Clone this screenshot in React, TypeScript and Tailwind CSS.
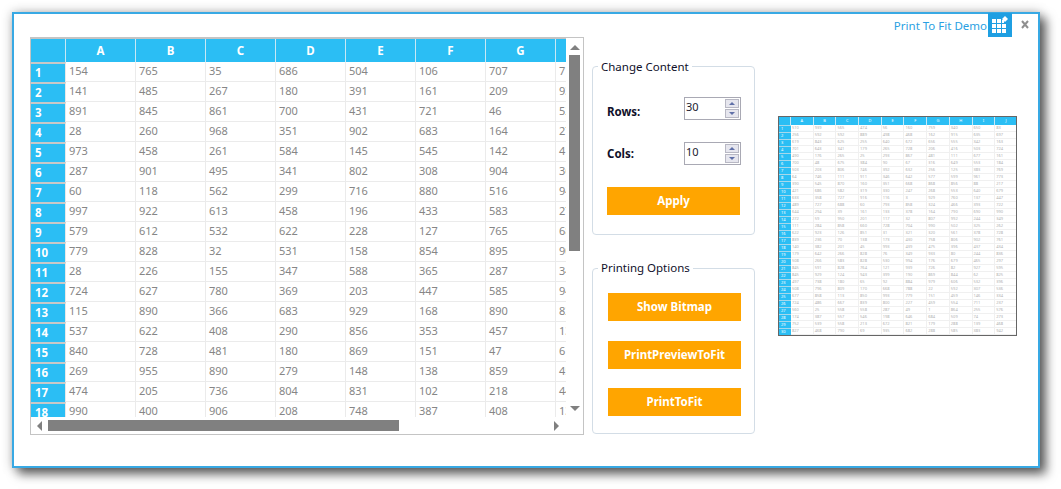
const uiFont = "font-['Noto_Sans','Open_Sans',sans-serif]";

const columns = ["A", "B", "C", "D", "E", "F", "G", "H"];

const rows = [
  [154, 765, 35, 686, 504, 106, 707, 712],
  [141, 485, 267, 180, 391, 161, 209, 934],
  [891, 845, 861, 700, 431, 721, 46, 528],
  [28, 260, 968, 351, 902, 683, 164, 276],
  [973, 458, 261, 584, 145, 545, 142, 413],
  [287, 901, 495, 341, 802, 308, 904, 365],
  [60, 118, 562, 299, 716, 880, 516, 947],
  [997, 922, 613, 458, 196, 433, 583, 271],
  [579, 612, 532, 622, 228, 127, 765, 683],
  [779, 828, 32, 531, 158, 854, 895, 902],
  [28, 226, 155, 347, 588, 365, 287, 349],
  [724, 627, 780, 369, 203, 447, 585, 946],
  [115, 890, 366, 683, 929, 168, 890, 827],
  [537, 622, 408, 290, 856, 353, 457, 135],
  [840, 728, 481, 180, 869, 151, 47, 618],
  [269, 955, 890, 279, 148, 138, 859, 452],
  [474, 205, 736, 804, 831, 102, 218, 447],
  [990, 400, 906, 208, 748, 387, 408, 136],
];

const thumbHeaders = ["A", "B", "C", "D", "E", "F", "G", "H", "I", "J"];

// the preview is stored by column, top to bottom
const thumbColumns = [
  [510, 256, 619, 701, 490, 700, 503, 64, 390, 421, 633, 489, 644, 272, 111, 622, 839, 140, 179, 508, 845, 845, 497, 508, 677, 724, 560, 174, 752, 827],
  [939, 592, 843, 643, 176, 48, 203, 746, 545, 686, 358, 727, 294, 59, 284, 923, 236, 382, 642, 266, 591, 929, 738, 796, 858, 486, 25, 387, 539, 468],
  [565, 592, 625, 341, 265, 675, 806, 111, 870, 582, 727, 688, 39, 950, 858, 126, 70, 201, 266, 583, 828, 124, 180, 809, 113, 667, 558, 557, 558, 790],
  [474, 889, 255, 179, 25, 384, 746, 911, 160, 319, 916, 60, 161, 201, 660, 851, 138, 45, 828, 828, 764, 943, 65, 170, 850, 839, 558, 546, 213, 69],
  [56, 498, 640, 265, 293, 90, 392, 346, 351, 330, 116, 793, 133, 117, 728, 31, 173, 993, 76, 530, 121, 399, 92, 668, 993, 800, 287, 198, 672, 935],
  [160, 468, 672, 728, 867, 67, 632, 642, 668, 247, 3, 858, 378, 32, 704, 321, 430, 439, 349, 994, 939, 190, 884, 788, 779, 227, 49, 646, 821, 682],
  [759, 162, 656, 206, 481, 316, 256, 577, 868, 268, 929, 324, 164, 807, 990, 320, 758, 475, 933, 176, 726, 869, 979, 22, 151, 459, 1, 684, 179, 288],
  [340, 915, 555, 416, 111, 649, 125, 599, 856, 553, 760, 466, 790, 992, 502, 561, 806, 396, 80, 679, 82, 844, 606, 592, 459, 554, 864, 509, 288, 585],
  [650, 635, 342, 503, 677, 553, 383, 961, 88, 640, 137, 393, 690, 244, 325, 378, 902, 437, 244, 465, 927, 62, 532, 307, 146, 711, 255, 74, 139, 383],
  [83, 697, 163, 724, 161, 184, 769, 773, 217, 679, 447, 722, 990, 349, 262, 728, 761, 434, 836, 297, 595, 825, 396, 536, 334, 237, 576, 273, 468, 942],
];

function Grid() {
  return (
    <div className="relative flex h-[398px] w-[554px] shrink-0 flex-col border border-[#c4c4c4] bg-white">
      <div className="h-[379px] w-[536px] overflow-hidden">
        <div className="flex h-[24px] border-t border-[#c4c4c4] bg-[#2bbef4]">
          <div className="w-[35px] shrink-0 border-r border-[#c8e8f5]" />
          {columns.map((col) => (
            <div
              key={col}
              className="flex w-[70px] shrink-0 items-center justify-center border-r border-[#c8e8f5] text-[11.5px] font-bold text-white"
            >
              {col}
            </div>
          ))}
        </div>
        {rows.map((row, i) => (
          <div key={i} className="flex h-[20px]">
            <div className="flex w-[35px] shrink-0 items-center border-t-2 border-r border-t-[#c8c8c8] border-r-[#e8e8e8] bg-[#2bbef4] pl-[4px] text-[11.5px] font-bold text-white">
              {i + 1}
            </div>
            {row.map((v, c) => (
              <div
                key={c}
                className="flex w-[70px] shrink-0 items-center border-r border-b border-[#ebebeb] pl-[3px] text-[11px] text-[#868686]"
              >
                {v}
              </div>
            ))}
          </div>
        ))}
      </div>

      <div className="absolute top-0 right-0 flex h-[379px] w-[17px] flex-col items-center bg-white">
        <div className="mt-[7px] h-0 w-0 border-x-[5px] border-b-[5px] border-x-transparent border-b-[#808080]" />
        <div className="mt-[5px] h-[196px] w-[11px] bg-[#808080]" />
        <div className="mt-[155px] h-0 w-0 border-x-[5px] border-t-[5px] border-x-transparent border-t-[#808080]" />
      </div>

      <div className="flex h-[17px] items-center pl-[6px]">
        <div className="h-0 w-0 border-y-[5px] border-r-[5px] border-y-transparent border-r-[#808080]" />
        <div className="ml-[6px] h-[11px] w-[351px] bg-[#808080]" />
        <div className="ml-[155px] h-0 w-0 border-y-[5px] border-l-[5px] border-y-transparent border-l-[#808080]" />
      </div>
    </div>
  );
}

function Spinner({ value }: { value: number }) {
  return (
    <div className="-mr-[1px] flex h-[23px] w-[57px] border border-[#a9a9b4] bg-white pl-[1px]">
      <span className="flex-1 pt-[1px] text-[11px] leading-[16px] text-[#1a1a2e]">{value}</span>
      <div className="mt-[1px] mr-[1px] flex flex-col gap-[1px]">
        <div className="flex h-[9px] w-[14px] items-center justify-center border border-[#b8b8c4] bg-[#e6e6ee]">
          <div className="h-0 w-0 border-x-[3px] border-b-[3px] border-x-transparent border-b-[#6070a8]" />
        </div>
        <div className="flex h-[9px] w-[14px] items-center justify-center border border-[#b8b8c4] bg-[#e6e6ee]">
          <div className="h-0 w-0 border-x-[3px] border-t-[3px] border-x-transparent border-t-[#6070a8]" />
        </div>
      </div>
    </div>
  );
}

function OrangeButton({ label, className }: { label: string; className: string }) {
  return (
    <div
      className={`flex h-[28px] w-[133px] items-center justify-center bg-[#ffa500] text-[11.5px] font-bold text-white ${className}`}
    >
      {label}
    </div>
  );
}

function Thumbnail() {
  return (
    <div className="h-[220px] w-[239px] overflow-hidden border border-[#666666] bg-white">
      <div className="flex h-[8px] bg-[#2bbef4]">
        <div className="w-[12px] shrink-0 border-r border-[#c8e8f5]" />
        {thumbHeaders.map((c) => (
          <div
            key={c}
            className="flex w-[22.7px] shrink-0 items-center justify-center border-r border-[#c8e8f5] text-[4px] leading-none text-white"
          >
            {c}
          </div>
        ))}
      </div>
      {thumbColumns[0].map((_, i) => (
        <div key={i} className="flex h-[7px]">
          <div className="flex w-[12px] shrink-0 items-center border-t border-[#a8d8ea] bg-[#2bbef4] pl-[2px] text-[4px] leading-none text-white">
            {i + 1}
          </div>
          {thumbColumns.map((col, c) => (
            <div
              key={c}
              className="flex w-[22.7px] shrink-0 items-center border-r border-b border-[#f0f0f0] pl-[1px] text-[4px] leading-none text-[#b0b0b0]"
            >
              {col[i]}
            </div>
          ))}
        </div>
      ))}
    </div>
  );
}

export default function App() {
  return (
    <div className={`h-[489px] w-[1061px] overflow-hidden bg-white pt-[12px] pl-[12px] ${uiFont}`}>
      <div className="flex h-[456px] w-[1028px] flex-col border-2 border-[#38a9e4] bg-white shadow-[6px_6px_10px_rgba(0,0,0,0.6),0_0_10px_rgba(0,0,0,0.25)]">
        <div className="flex h-[23px] shrink-0 items-start justify-end">
          <span className="mt-[4px] text-[11.5px] leading-[16px] text-[#2a9fe2]">Print To Fit Demo</span>
          <div className="-mt-[1px] ml-[1px] h-[24px] w-[24px] bg-[#1f9fe2]">
            <svg width="24" height="24" viewBox="0 0 24 24">
              <path
                d="M4 6h4v4H4zM9 6h4v4H9zM14 7h2v3h-2zM4 11h4v4H4zM9 11h4v4H9zM14 11h4v4h-4zM4 16h4v4H4zM9 16h4v4H9zM14 16h4v4h-4z"
                fill="#fff"
              />
              <path d="M17 3l3 3-3 3-3-3z" fill="#fff" />
            </svg>
          </div>
          <svg className="mt-[6px] mr-[9px] ml-[9px]" width="8" height="9" viewBox="0 0 8 9">
            <path d="M1 1l6 7M7 1L1 8" stroke="#8f8f8f" strokeWidth="2" />
          </svg>
        </div>

        <div className="flex items-start pl-[16px]">
          <Grid />

          <div className="ml-[8px] flex w-[163px] shrink-0 flex-col">
            <fieldset className="mt-[20px] h-[178px] rounded-[4px] border border-[#d3dde6] px-[14px]">
              <legend className="-ml-[9px] px-[3px] pt-[2px] text-[11.5px] leading-[16px] text-[#10102a]">
                Change Content
              </legend>
              <div className="mt-[22px] flex h-[23px] items-center justify-between">
                <span className="pt-[6px] text-[11.5px] font-bold text-[#10102a]">Rows:</span>
                <Spinner value={30} />
              </div>
              <div className="mt-[22px] flex h-[23px] items-center justify-between">
                <span className="text-[11.5px] font-bold text-[#10102a]">Cols:</span>
                <Spinner value={10} />
              </div>
              <OrangeButton label="Apply" className="mt-[22px]" />
            </fieldset>

            <fieldset className="mt-[25px] h-[174px] rounded-[4px] border border-[#d3dde6] pr-[13px] pl-[15px]">
              <legend className="-ml-[10px] px-[3px] text-[11.5px] leading-[16px] text-[#10102a]">
                Printing Options
              </legend>
              <OrangeButton label="Show Bitmap" className="mt-[17px]" />
              <OrangeButton label="PrintPreviewToFit" className="mt-[20px]" />
              <OrangeButton label="PrintToFit" className="mt-[19px]" />
            </fieldset>
          </div>

          <div className="mt-[79px] ml-[23px]">
            <Thumbnail />
          </div>
        </div>
      </div>
    </div>
  );
}
